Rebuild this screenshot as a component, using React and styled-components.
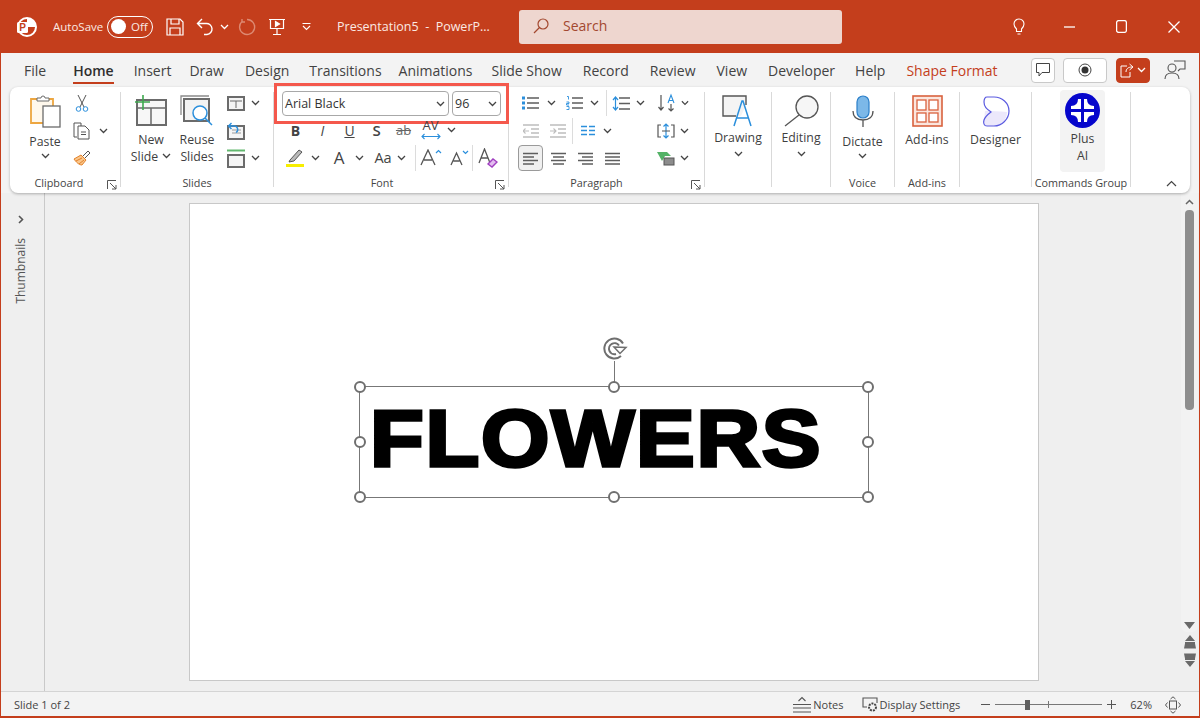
import React from 'react';
import styled, { createGlobalStyle } from 'styled-components';

const GlobalStyle = createGlobalStyle`
  html, body { margin: 0; padding: 0; }
  body { font-family: "Open Sans", "Noto Sans", sans-serif; color: #3b3b3b; }
`;

const Shell = styled.div`
  width: 1200px;
  height: 718px;
  background: #c43e1c;
  display: flex;
  flex-direction: column;
  overflow: hidden;
`;

/* title bar */
const TitleBar = styled.div`
  height: 53px;
  flex: none;
  display: flex;
  align-items: center;
  color: #fff;
  padding-left: 15px;
`;
const TitleIcon = styled.span`
  display: flex;
  align-items: center;
  justify-content: center;
  width: ${p => p.$w}px;
  margin-left: ${p => p.$ml || 0}px;
`;
const AutoSave = styled.span`
  font-size: 11.5px;
  margin-left: 16px;
  width: 47px;
  white-space: nowrap;
  color: #fbe9e3;
`;
const Toggle = styled.span`
  width: 46px;
  height: 22px;
  box-sizing: border-box;
  margin-left: 7px;
  border: 1px solid #fff;
  border-radius: 11px;
  display: flex;
  align-items: center;
  padding-left: 3px;
  gap: 5px;
  font-size: 11.5px;
  color: #fbe9e3;
  &::before {
    content: '';
    width: 15px;
    height: 15px;
    border-radius: 50%;
    background: #fff;
  }
`;
const DocName = styled.span`
  font-size: 12.5px;
  margin-left: 26px;
  width: 182px;
  white-space: pre;
  color: #fbe9e3;
`;
const SearchBox = styled.div`
  width: 323px;
  height: 34px;
  background: #eed6cf;
  border-radius: 3px;
  display: flex;
  align-items: center;
  padding: 0 0 2px 14px;
  box-sizing: border-box;
  gap: 14px;
  font-size: 14px;
  color: #a3482f;
`;

/* tabs */
const TabBar = styled.div`
  height: 34px;
  flex: none;
  margin: 0 1px;
  background: #f3f3f3;
  display: flex;
  align-items: center;
  padding-left: 23px;
  box-sizing: border-box;
`;
const Tab = styled.span`
  position: relative;
  font-size: 14px;
  margin-right: ${p => p.$mr}px;
  white-space: nowrap;
  color: ${p => (p.$accent ? '#c43e1c' : '#424242')};
  font-weight: ${p => (p.$active ? 600 : 400)};
  ${p => p.$active && `
    color: #2e2e2e;
    &::after {
      content: '';
      position: absolute;
      left: 0;
      right: 0;
      bottom: -4px;
      height: 2px;
      background: #c43e1c;
    }
  `}
`;
const TabActions = styled.div`
  margin-left: auto;
  display: flex;
  align-items: center;
  margin-right: 12px;
`;
const ActionButton = styled.span`
  width: ${p => p.$w}px;
  height: 25px;
  margin-left: ${p => p.$ml || 0}px;
  box-sizing: border-box;
  border-radius: 4px;
  border: 1px solid ${p => (p.$fill ? '#c43e1c' : '#c9c9c9')};
  background: ${p => (p.$fill ? '#c43e1c' : p.$plain ? 'transparent' : '#fff')};
  ${p => p.$plain && 'border-color: transparent;'}
  display: flex;
  align-items: center;
  justify-content: center;
  gap: 3px;
`;

/* ribbon */
const RibbonWrap = styled.div`
  height: 106px;
  flex: none;
  margin: 0 1px;
  background: #f3f3f3;
  padding: 0 9px;
  position: relative;
  z-index: 1;
`;
const Ribbon = styled.div`
  height: 106px;
  background: #fff;
  border-radius: 8px;
  box-shadow: 0 1px 3px rgba(0, 0, 0, 0.28);
  display: flex;
  padding-top: 5px;
  box-sizing: border-box;
  position: relative;
`;
const Group = styled.div`
  width: ${p => p.$w}px;
  height: 95px;
  flex: none;
  box-sizing: border-box;
  border-right: 1px solid #d9d9d9;
  display: flex;
  flex-direction: column;
  position: relative;
`;
const GroupBody = styled.div`
  height: 84px;
  flex: none;
  display: flex;
  padding-left: ${p => p.$pl || 0}px;
`;
const GroupLabel = styled.div`
  height: 14px;
  line-height: 14px;
  font-size: 10.8px;
  color: #444;
  white-space: nowrap;
  text-align: center;
  margin-left: ${p => p.$shift || 0}px;
`;
const Launcher = styled.span`
  position: absolute;
  right: 3px;
  bottom: -3px;
  display: flex;
`;
const BigButton = styled.div`
  width: ${p => p.$w}px;
  margin-left: ${p => p.$ml || 0}px;
  height: ${p => p.$h || 84}px;
  flex: none;
  display: flex;
  flex-direction: column;
  align-items: center;
  border-radius: 4px;
  background: ${p => (p.$tint ? '#f3f3f3' : 'transparent')};
  margin-top: ${p => p.$mt || 0}px;
`;
const BigIcon = styled.div`
  height: ${p => p.$h || 38.5}px;
  flex: none;
  display: flex;
  align-items: center;
  justify-content: center;
`;
const BigLabel = styled.div`
  font-size: 12.3px;
  line-height: 17px;
  white-space: nowrap;
  margin-top: ${p => p.$dy || 0}px;
  color: #3f3f3f;
  display: flex;
  align-items: center;
  gap: 4px;
`;
const BigChevron = styled.div`
  height: 15px;
  display: flex;
  align-items: center;
  margin-top: ${p => p.$dy || 0}px;
`;
const ToolStack = styled.div`
  margin-left: ${p => p.$ml || 0}px;
  display: flex;
  flex-direction: column;
  gap: 5.5px;
  flex: none;
`;
const ToolRow = styled.div`
  height: 22px;
  display: flex;
  align-items: center;
  flex: none;
  margin-top: ${p => p.$mt || 0}px;
`;
const Tool = styled.span`
  width: ${p => p.$w}px;
  height: ${p => (p.$selected ? 26 : 22)}px;
  margin-left: ${p => p.$ml || 0}px;
  flex: none;
  box-sizing: border-box;
  display: flex;
  align-items: center;
  justify-content: center;
  font-size: ${p => p.$size || 13}px;
  color: ${p => p.$color || '#444'};
  font-weight: ${p => p.$weight || 400};
  font-style: ${p => (p.$italic ? 'italic' : 'normal')};
  text-decoration: ${p => p.$line || 'none'};
  ${p => p.$selected && 'border: 1px solid #9a9a9a; border-radius: 4px; background: #f0f0f0;'}
`;
const StackedTool = styled(Tool)`
  flex-direction: column;
  justify-content: flex-start;
  line-height: 13px;
  gap: 1px;
`;
const RowSep = styled.span`
  width: 1px;
  height: ${p => p.$h || 26}px;
  background: #dcdcdc;
  flex: none;
  margin-left: ${p => p.$ml || 0}px;
`;
const FontStack = styled.div`
  display: flex;
  flex-direction: column;
  padding-left: 8px;
  margin-top: -1px;
`;
const FontPickers = styled.div`
  display: flex;
  gap: 3px;
  height: 25px;
  flex: none;
  outline: 3px solid #f4584c;
  outline-offset: 5px;
  width: 219px;
`;
const Picker = styled.div`
  width: ${p => p.$w}px;
  box-sizing: border-box;
  border: 1px solid #a8a8a8;
  border-radius: 4px;
  display: flex;
  align-items: center;
  justify-content: space-between;
  padding: 0 3px 0 2px;
  font-size: 12.5px;
  color: #333;
  background: #fff;
`;
const CollapseBtn = styled.span`
  position: absolute;
  right: 13px;
  bottom: 6px;
  display: flex;
`;

/* workspace */
const Workspace = styled.div`
  flex: 1;
  min-height: 0;
  margin: 0 1px;
  background: #efefef;
  display: flex;
  border-bottom: 1px solid #d4d4d4;
`;
const ThumbPane = styled.div`
  width: 44px;
  flex: none;
  box-sizing: border-box;
  border-right: 1px solid #c9c9c9;
  display: flex;
  flex-direction: column;
  align-items: center;
  padding: 22px 4px 0 0;
  gap: 14px;
`;
const ThumbLabel = styled.span`
  writing-mode: vertical-rl;
  transform: rotate(180deg);
  font-size: 12px;
  color: #555;
`;
const Canvas = styled.div`
  flex: 1;
  padding: 10px 0 0 144px;
`;
const Slide = styled.div`
  width: 850px;
  height: 478px;
  box-sizing: border-box;
  background: #fff;
  border: 1px solid #c8c8c8;
  position: relative;
`;
const TextFrame = styled.div`
  position: absolute;
  left: 169px;
  top: 182px;
  width: 510px;
  height: 112px;
  box-sizing: border-box;
  border: 1px solid #777;
  display: flex;
  align-items: center;
  padding: 0 0 6px 10px;
`;
const BigWord = styled.span`
  font-family: "Liberation Sans", Arial, sans-serif;
  font-weight: 700;
  font-size: 80px;
  line-height: 1;
  color: #000;
  -webkit-text-stroke: 3.4px #000;
  letter-spacing: 1.6px;
  white-space: nowrap;
  transform: scaleX(1.1);
  transform-origin: left center;
`;
const Handle = styled.span`
  position: absolute;
  left: ${p => p.$x}%;
  top: ${p => p.$y}%;
  width: 12px;
  height: 12px;
  box-sizing: border-box;
  border: 2px solid #6f6f6f;
  border-radius: 50%;
  background: #fff;
  transform: translate(-50%, -50%);
`;
const RotateStem = styled.span`
  position: absolute;
  left: 50%;
  top: -26px;
  width: 1px;
  height: 21px;
  background: #777;
`;
const RotateIcon = styled.span`
  position: absolute;
  left: calc(50% - 12px);
  top: -50px;
  display: flex;
`;
const ScrollColumn = styled.div`
  width: 17px;
  flex: none;
  margin-right: 1px;
  display: flex;
  flex-direction: column;
  align-items: center;
`;
const ScrollTrack = styled.div`
  width: 100%;
  height: 439px;
  flex: none;
  background: #f2f2f2;
  border-radius: 0 0 6px 6px;
  display: flex;
  flex-direction: column;
  align-items: center;
  padding: 6px 0 3px;
  box-sizing: border-box;
`;
const ScrollThumb = styled.div`
  width: 9px;
  height: 200px;
  flex: none;
  margin-top: 5px;
  background: #8e8e8e;
  border-radius: 4px;
`;
const ScrollSpacer = styled.div`
  flex: 1;
`;
const ScrollDouble = styled.div`
  display: flex;
  flex: none;
  margin-top: ${p => p.$mt}px;
`;

/* status bar */
const StatusBar = styled.div`
  height: 24px;
  flex: none;
  margin: 0 1px 2px;
  background: #f3f3f3;
  display: flex;
  align-items: center;
  font-size: 11px;
  color: #444;
  padding: 1px 0 0 13px;
  box-sizing: border-box;
`;
const StatusRight = styled.div`
  margin-left: auto;
  display: flex;
  align-items: center;
`;
const StatusItem = styled.span`
  display: flex;
  align-items: center;
  gap: 2px;
  margin-left: ${p => p.$ml || 0}px;
  white-space: nowrap;
`;
const ZoomTrack = styled.span`
  width: 107px;
  height: 1px;
  background: #777;
  position: relative;
  margin-left: 5px;
  &::before {
    content: '';
    position: absolute;
    left: 30px;
    top: -4px;
    width: 5px;
    height: 10px;
    background: #5f5f5f;
  }
  &::after {
    content: '';
    position: absolute;
    left: 53px;
    top: -3px;
    width: 1px;
    height: 7px;
    background: #777;
  }
`;

/* icons */
const G = '#6b6b6b';
const B = '#2b8fdc';
const Chevron = ({ color = '#444' }) => (
  <svg width="9" height="6" viewBox="0 0 9 6" fill="none" stroke={color} strokeWidth="1.3"><path d="M1 1l3.5 3.5L8 1" /></svg>
);
const Svg = ({ w, h, children, fill = 'none', stroke = G, sw = 1.3 }) => (
  <svg width={w} height={h} viewBox={`0 0 ${w} ${h}`} fill={fill} stroke={stroke} strokeWidth={sw}>{children}</svg>
);

const LogoIcon = () => (
  <svg width="22" height="22" viewBox="0 0 22 22">
    <circle cx="12" cy="11" r="9" fill="none" stroke="#fff" strokeWidth="2" />
    <path d="M12 2a9 9 0 0 1 9 9h-9z" fill="#fff" />
    <rect x="2" y="6" width="11" height="11" rx="1.5" fill="#fff" />
    <text x="7.5" y="15" textAnchor="middle" fontFamily="Liberation Sans" fontWeight="700" fontSize="10" fill="#c43e1c">P</text>
  </svg>
);
const SaveIcon = () => (
  <Svg w={18} h={18} stroke="#fff" sw={1.2}>
    <path d="M1 1h13l3 3v13H1z" />
    <path d="M5 1v5h8V1M4 17v-7h10v7" />
  </Svg>
);
const UndoIcon = () => (
  <Svg w={18} h={18} stroke="#fff" sw={1.4}>
    <path d="M6 1L1.5 5.5 6 10M2 5.500h8a5.500 5.500 0 0 1 1 11H8" />
  </Svg>
);
const RedoIcon = () => (
  <Svg w={18} h={18} stroke="#dd8a73" sw={1.4}>
    <path d="M4 3.500A7.500 7.500 0 1 0 9 1.500M4 1v3h3" />
  </Svg>
);
const PresentIcon = () => (
  <Svg w={18} h={18} stroke="#fff" sw={1.2}>
    <path d="M1 1.500h16M2.500 1.500v9h13v-9M9 10.500V16M5 16.500h8" />
    <path d="M7.500 3.500l4 2.500-4 2.500z" fill="#fff" />
  </Svg>
);
const QatIcon = () => (
  <Svg w={9} h={8} stroke="#fff" sw={1.1}>
    <path d="M0.500 0.500h8M1 3l3.500 3.500L8 3" />
  </Svg>
);
const SearchIcon = () => (
  <Svg w={16} h={16} stroke="#a3482f" sw={1.2}>
    <circle cx="10" cy="6" r="5" />
    <path d="M6.500 9.500L1 15" />
  </Svg>
);
const BulbIcon = () => (
  <Svg w={12} h={17} stroke="#fff" sw={1.1}>
    <path d="M3.500 11C1.500 9 1 7.500 1 6a5 5 0 0 1 10 0c0 1.500-.5 3-2.500 5v2.500h-5zM4.500 16h3" />
  </Svg>
);
const MinIcon = () => <Svg w={11} h={2} stroke="#fff"><path d="M0 1h11" /></Svg>;
const MaxIcon = () => <Svg w={11} h={13} stroke="#fff"><rect x="0.600" y="0.600" width="9.800" height="11.800" rx="2" /></Svg>;
const CloseIcon = () => <Svg w={12} h={12} stroke="#fff"><path d="M.5.500l11 11M11.500.500l-11 11" /></Svg>;

const CommentIcon = () => (
  <Svg w={14} h={14} stroke="#444" sw={1}><path d="M.5.500h13v9H6L3 13V9.500H.5z" /></Svg>
);
const RecordIcon = () => (
  <svg width="14" height="14" viewBox="0 0 14 14"><circle cx="7" cy="7" r="6" fill="none" stroke="#444" /><circle cx="7" cy="7" r="3.500" fill="#333" /></svg>
);
const ShareIcon = () => (
  <Svg w={14} h={15} stroke="#fff" sw={1}><path d="M7 3H1v11h9V9M6 9c0-3 2-5 6-5M9.500 1L13 4 9.500 7" /></Svg>
);
const PersonIcon = () => (
  <Svg w={22} h={20} stroke="#555" sw={1.1}>
    <circle cx="8" cy="8" r="4" />
    <path d="M1 19c0-4 3-6 7-6s7 2 7 6M10 1h11v8h-5l-2 2" />
  </Svg>
);

const PasteIcon = () => (
  <svg width="32" height="34" viewBox="0 0 32 34" fill="none">
    <path d="M2 5h22v24H2z" stroke="#eda640" strokeWidth="1.800" fill="#fff8ec" />
    <path d="M8 7V4h4a2 2 0 0 1 4 0h4v3z" stroke={G} fill="#fff" />
    <rect x="14" y="12" width="17" height="21" fill="#fff" stroke={G} strokeWidth="1.300" />
  </svg>
);
const ScissorsIcon = () => (
  <svg width="14" height="18" viewBox="0 0 14 18" fill="none">
    <path d="M3 1l6 12M11 1L5 13" stroke="#555" />
    <circle cx="3.500" cy="15" r="2.300" stroke={B} />
    <circle cx="10.500" cy="15" r="2.300" stroke={B} />
  </svg>
);
const CopyIcon = () => (
  <Svg w={18} h={18} stroke="#555" sw={1}>
    <path d="M4 15H1V1h7v3" />
    <path d="M5 4h7l4 4v9H5z" />
    <path d="M8 10h5M8 12.500h5" />
  </Svg>
);
const BrushIcon = () => (
  <svg width="18" height="16" viewBox="0 0 18 16" fill="none">
    <path d="M1 9l7-4 5 5-4 5C6 15 3 12 1 9z" fill="#f9c68c" stroke="#e38128" />
    <path d="M3 11l6-3M6 14l5-4" stroke="#e38128" />
    <path d="M10 6l5-5 2 2-5 5" stroke="#555" />
  </svg>
);
const NewSlideIcon = () => (
  <svg width="34" height="32" viewBox="0 0 34 32" fill="none">
    <rect x="3" y="5" width="29" height="25" stroke={G} strokeWidth="2" fill="#f7f7f7" />
    <path d="M3 13h29M17 13v17" stroke={G} strokeWidth="1.500" />
    <path d="M9 0v15M1 7h15" stroke="#3ea84e" strokeWidth="1.600" />
  </svg>
);
const ReuseIcon = () => (
  <svg width="34" height="32" viewBox="0 0 34 32" fill="none">
    <path d="M1 20V1h28" stroke="#8a8a8a" strokeWidth="1.300" />
    <rect x="4" y="4" width="25" height="22" stroke={G} strokeWidth="2" fill="#f3f3f3" />
    <circle cx="20" cy="18" r="7" fill="#fff" stroke={B} strokeWidth="1.500" />
    <path d="M25 23l7 7" stroke={B} strokeWidth="1.500" />
  </svg>
);
const LayoutIcon = () => (
  <svg width="18" height="15" viewBox="0 0 18 15" fill="none">
    <rect x="1" y="1" width="16" height="13" stroke={G} strokeWidth="2" fill="#f4f4f4" />
    <path d="M3 5h12M9 5v7" stroke={G} />
  </svg>
);
const ResetIcon = () => (
  <svg width="18" height="18" viewBox="0 0 18 18" fill="none">
    <rect x="1" y="4" width="16" height="13" stroke={G} strokeWidth="2" fill="#f4f4f4" />
    <path d="M5 8h9M5 11h9" stroke="#9a9a9a" />
    <path d="M4.500 1L1.500 4 4.500 7M2 4h5a3.500 3.500 0 0 1 2 6.500" stroke={B} strokeWidth="1.400" />
  </svg>
);
const SectionIcon = () => (
  <svg width="18" height="19" viewBox="0 0 18 19" fill="none">
    <path d="M0 1.500h18" stroke="#62b86f" strokeWidth="2" />
    <rect x="1" y="6" width="16" height="12" stroke={G} strokeWidth="2" fill="#f4f4f4" />
  </svg>
);
const HighlightIcon = () => (
  <svg width="18" height="19" viewBox="0 0 18 19" fill="none">
    <path d="M4 12l9-10 3 2-8 9-5 1z" stroke="#555" fill="#bbb" />
    <path d="M0 17.500h18" stroke="#f7ee00" strokeWidth="3" />
  </svg>
);
const EraserIcon = () => (
  <svg width="20" height="20" viewBox="0 0 20 20" fill="none">
    <path d="M1 15L6.500 1 12 15M3 10h7" stroke="#555" strokeWidth="1.300" />
    <path d="M10 16l5-5 4 3-5 5z" stroke="#a03fc0" strokeWidth="1.400" fill="#e3bdf0" />
  </svg>
);
const GrowGlyph = ({ down, big }) => (
  <svg width={big ? 22 : 19} height="17" viewBox={big ? '0 0 22 17' : '0 0 19 17'} fill="none">
    <path d={big ? 'M1 16L8 1l7 15M4 11h8' : 'M1 16L6.500 4 12 16M3.500 12h6'} stroke="#555" strokeWidth="1.300" />
    <path d={down ? 'M13 2l2.500 2.500L18 2' : 'M16 4l2.500-2.500L21 4'} stroke={B} strokeWidth="1.200" />
  </svg>
);
const Lines = ({ rows, w = 15 }) => (
  <Svg w={w} h={13} stroke="#5e5e5e" sw={1.300}>
    <path d={rows} />
  </Svg>
);
const BulletsIcon = () => (
  <svg width="17" height="14" viewBox="0 0 17 14" fill="none">
    <path d="M5 2h12M5 7h12M5 12h12" stroke="#5e5e5e" strokeWidth="1.300" />
    <path d="M0 .500h3v3H0zM0 5.500h3v3H0zM0 10.500h3v3H0z" fill={B} />
  </svg>
);
const NumberingIcon = () => (
  <svg width="17" height="14" viewBox="0 0 17 14" fill="none">
    <path d="M6 2h11M6 7h11M6 12h11" stroke="#5e5e5e" strokeWidth="1.300" />
    <path d="M1 .500h1.500v3M.500 6h2.500v1.500H.500V9h2.500M.500 10.500h2.500v3H.500" stroke={B} strokeWidth=".9" />
  </svg>
);
const SpacingIcon = () => (
  <svg width="18" height="15" viewBox="0 0 18 15" fill="none">
    <path d="M7 2h11M7 7.500h11M7 13h11" stroke="#5e5e5e" strokeWidth="1.300" />
    <path d="M1 4l2.500-3L6 4M3.500 2v11M1 11l2.500 3L6 11" stroke={B} strokeWidth="1.200" />
  </svg>
);
const TextDirIcon = () => (
  <svg width="20" height="20" viewBox="0 0 20 20" fill="none">
    <path d="M3 2v15M.500 14L3 17l2.500-3M13 11v7M10.500 15.500L13 18l2.500-2.500" stroke="#555" strokeWidth="1.200" />
    <path d="M10 10l3-8 3 8M11 7.500h4" stroke={B} strokeWidth="1.100" />
  </svg>
);
const IndentIcon = ({ flip }) => (
  <svg width="16" height="14" viewBox="0 0 16 14" fill="none">
    <path d="M0 1h16M8 5h8M8 9h8M0 13h16" stroke="#bdbdbd" strokeWidth="1.300" />
    <path d={flip ? 'M0 7h6M3.500 4.500L6 7 3.500 9.500' : 'M6 7H0M2.500 4.500L0 7l2.500 2.500'} stroke="#bdbdbd" strokeWidth="1.100" />
  </svg>
);
const ColumnsIcon = () => (
  <svg width="14" height="11" viewBox="0 0 14 11" fill="none">
    <path d="M0 1.500h6M8 1.500h6M0 5.500h6M8 5.500h6M0 9.500h6M8 9.500h6" stroke={B} strokeWidth="1.700" />
  </svg>
);
const AlignTextIcon = () => (
  <svg width="18" height="16" viewBox="0 0 18 16" fill="none">
    <path d="M4 2H1v12h3M14 2h3v12h-3" stroke="#555" strokeWidth="1.200" />
    <path d="M9 1v14M6.500 3.500L9 1l2.500 2.500M6.500 12.500L9 15l2.500-2.500" stroke={B} strokeWidth="1.200" />
    <path d="M5 8h8" stroke="#555" strokeWidth="1" />
  </svg>
);
const SmartArtIcon = () => (
  <svg width="18" height="15" viewBox="0 0 18 15" fill="none">
    <path d="M0 1h10l4 4H8l-3 5z" fill="#54b267" />
    <rect x="7" y="7" width="10" height="7" fill="#8c8c8c" stroke="#555" />
  </svg>
);
const DrawingIcon = () => (
  <svg width="32" height="32" viewBox="0 0 32 32" fill="none">
    <path d="M1 1h23v9l-5 11H1z" fill="#f4f4f4" />
    <path d="M14 21H1V1h23v9" stroke="#555" strokeWidth="1.400" />
    <path d="M12 31l8-25h1l8 25M15 23h11" stroke={B} strokeWidth="1.500" />
  </svg>
);
const EditingIcon = () => (
  <svg width="35" height="32" viewBox="0 0 35 32" fill="none">
    <circle cx="23" cy="12" r="11" fill="#f6f6f6" stroke="#555" strokeWidth="1.300" />
    <path d="M15 20L1 31" stroke="#555" strokeWidth="1.300" />
  </svg>
);
const MicIcon = () => (
  <svg width="22" height="32" viewBox="0 0 22 32" fill="none">
    <rect x="5" y="1" width="12" height="22" rx="6" fill="#7cb8e8" stroke="#2b7fc9" strokeWidth="1.200" />
    <path d="M1 16c0 6 4 9 10 9s10-3 10-9M11 25v7" stroke="#555" strokeWidth="1.300" />
  </svg>
);
const AddinsIcon = () => (
  <svg width="31" height="32" viewBox="0 0 31 32" fill="none">
    <rect x="1" y="1" width="29" height="30" fill="#fbe6de" stroke="#d9623e" strokeWidth="1.600" />
    <rect x="5" y="5" width="9" height="10" fill="#fff" stroke="#d9623e" strokeWidth="1.300" />
    <rect x="17" y="5" width="9" height="10" fill="#fff" stroke="#d9623e" strokeWidth="1.300" />
    <rect x="5" y="18" width="9" height="9" fill="#fff" stroke="#d9623e" strokeWidth="1.300" />
    <rect x="17" y="18" width="9" height="9" fill="#fff" stroke="#d9623e" strokeWidth="1.300" />
  </svg>
);
const DesignerIcon = () => (
  <svg width="28" height="31" viewBox="0 0 28 31" fill="none">
    <path d="M3 15c7 0 14 0 22 1 0 8-6 14-13 14H5c-3 0-4-3-3-6z" fill="#ece8fb" />
    <path d="M5 1h7c8 0 15 6 15 14s-7 15-15 15H5c-3 0-4-3-3-6 1-3 3-5 7-8-4-3-7-5-7-10 0-3 1-5 3-5z" stroke="#5a5ae0" strokeWidth="1.200" />
  </svg>
);
const PlusAiIcon = () => (
  <svg width="35" height="35" viewBox="0 0 35 35">
    <circle cx="17.500" cy="17.500" r="17.500" fill="#0606cc" />
    <path d="M16 6V16H6V13Q13 13 13 6Z" fill="#fff" />
    <path d="M19 6V16H29V13Q22 13 22 6Z" fill="#fff" />
    <path d="M16 29V19H6V22Q13 22 13 29Z" fill="#fff" />
    <path d="M19 29V19H29V22Q22 22 22 29Z" fill="#fff" />
  </svg>
);
const LaunchIcon = () => (
  <Svg w={10} h={10} stroke="#555" sw={1}><path d="M.5 9V.500H9M3 3l6 6M9 5v4H5" /></Svg>
);
const RotateGlyph = () => (
  <svg width="28" height="24" viewBox="0 0 28 24" fill="none">
    <path d="M21 6.500A10 10 0 1 0 19 19" stroke="#6f6f6f" strokeWidth="2" />
    <path d="M17 8.500A5.500 5.500 0 1 0 14 17" stroke="#6f6f6f" strokeWidth="2" />
    <path d="M12 10l12 .5-6 6z" fill="#fff" stroke="#6f6f6f" strokeWidth="1.500" />
  </svg>
);
const Tri = ({ color = '#6a6a6a' }) => (
  <svg width="11" height="7" viewBox="0 0 11 7"><path d="M0 0h11L5.500 7z" fill={color} /></svg>
);
const DoubleTri = ({ up }) => (
  <svg width="12" height="14" viewBox="0 0 12 14" fill="#6a6a6a">
    {up ? <path d="M6 0l5 6H1zM1 7h10v1.500l1 5H0l1-5z" /> : <path d="M6 14l5-6H1zM1 7h10V5.500l1-5H0l1 5z" />}
  </svg>
);
const NotesIcon = () => (
  <Svg w={18} h={18} stroke="#555" sw={1.100}><path d="M0 8.500h18M0 12h18M0 16h18M5.500 5L9 1.500 12.500 5" /></Svg>
);
const DisplayIcon = () => (
  <svg width="16" height="15" viewBox="0 0 16 15" fill="none">
    <path d="M5 10H1V1h14v5" stroke="#555" strokeWidth="1.100" />
    <circle cx="10.500" cy="10" r="3.500" stroke="#444" strokeWidth="2" strokeDasharray="2 1" />
  </svg>
);
const FitIcon = () => (
  <Svg w={16} h={18} stroke="#555" sw={1}>
    <rect x="4.500" y="5" width="7" height="8" />
    <path d="M5.500 3L8 .8 10.500 3M5.500 15L8 17.200 10.500 15M2.500 6.500L.5 9l2 2.500M13.500 6.500l2 2.500-2 2.500" />
  </Svg>
);

const tabs = [
  ['File', 27],
  ['Home', 20],
  ['Insert', 18],
  ['Draw', 21],
  ['Design', 20],
  ['Transitions', 17],
  ['Animations', 19],
  ['Slide Show', 21],
  ['Record', 21],
  ['Review', 21],
  ['View', 21],
  ['Developer', 20],
  ['Help', 21],
];

const Big = ({ w, ml, icon, lines, chevron, iconH, labelDy = 0, chevDy = 0, tint, h, mt }) => (
  <BigButton $w={w} $ml={ml} $tint={tint} $h={h} $mt={mt}>
    <BigIcon $h={iconH}>{icon}</BigIcon>
    {lines.map((line, i) => (
      <BigLabel key={line} $dy={i === 0 ? labelDy : 0}>
        {line}
        {chevron === 'inline' && i === lines.length - 1 && <Chevron />}
      </BigLabel>
    ))}
    {chevron === true && <BigChevron $dy={chevDy}><Chevron /></BigChevron>}
  </BigButton>
);

const App = () => (
  <Shell>
    <GlobalStyle />
    <TitleBar>
      <TitleIcon $w={22}><LogoIcon /></TitleIcon>
      <AutoSave>AutoSave</AutoSave>
      <Toggle>Off</Toggle>
      <TitleIcon $w={18} $ml={13}><SaveIcon /></TitleIcon>
      <TitleIcon $w={18} $ml={12}><UndoIcon /></TitleIcon>
      <TitleIcon $w={9} $ml={6}><Chevron color="#fff" /></TitleIcon>
      <TitleIcon $w={18} $ml={9}><RedoIcon /></TitleIcon>
      <TitleIcon $w={18} $ml={12}><PresentIcon /></TitleIcon>
      <TitleIcon $w={9} $ml={16}><QatIcon /></TitleIcon>
      <DocName>Presentation5  -  PowerP...</DocName>
      <SearchBox><SearchIcon />Search</SearchBox>
      <TitleIcon $w={12} $ml={171}><BulbIcon /></TitleIcon>
      <TitleIcon $w={11} $ml={39}><MinIcon /></TitleIcon>
      <TitleIcon $w={11} $ml={41}><MaxIcon /></TitleIcon>
      <TitleIcon $w={12} $ml={41}><CloseIcon /></TitleIcon>
    </TitleBar>

    <TabBar>
      {tabs.map(([name, mr]) => (
        <Tab key={name} $mr={mr} $active={name === 'Home'}>{name}</Tab>
      ))}
      <Tab $accent $mr={0}>Shape Format</Tab>
      <TabActions>
        <ActionButton $w={24}><CommentIcon /></ActionButton>
        <ActionButton $w={44} $ml={8}><RecordIcon /></ActionButton>
        <ActionButton $w={34} $ml={9} $fill><ShareIcon /><Chevron color="#fff" /></ActionButton>
        <ActionButton $w={24} $ml={13} $plain><PersonIcon /></ActionButton>
      </TabActions>
    </TabBar>

    <RibbonWrap>
      <Ribbon>
        <Group $w={111}>
          <GroupBody>
            <Big w={42} ml={14} icon={<PasteIcon />} lines={['Paste']} chevron labelDy={2} chevDy={-1} />
            <ToolStack $ml={3}>
              <ToolRow><Tool $w={26}><ScissorsIcon /></Tool></ToolRow>
              <ToolRow><Tool $w={26}><CopyIcon /></Tool><Tool $w={16}><Chevron /></Tool></ToolRow>
              <ToolRow><Tool $w={26}><BrushIcon /></Tool></ToolRow>
            </ToolStack>
          </GroupBody>
          <GroupLabel $shift={-12}>Clipboard</GroupLabel>
          <Launcher><LaunchIcon /></Launcher>
        </Group>

        <Group $w={153}>
          <GroupBody>
            <Big w={44} ml={8} icon={<NewSlideIcon />} lines={['New', 'Slide']} chevron="inline" />
            <Big w={44} ml={2} icon={<ReuseIcon />} lines={['Reuse', 'Slides']} />
            <ToolStack $ml={5}>
              <ToolRow><Tool $w={24}><LayoutIcon /></Tool><Tool $w={14}><Chevron /></Tool></ToolRow>
              <ToolRow><Tool $w={24}><ResetIcon /></Tool></ToolRow>
              <ToolRow><Tool $w={24}><SectionIcon /></Tool><Tool $w={14}><Chevron /></Tool></ToolRow>
            </ToolStack>
          </GroupBody>
          <GroupLabel>Slides</GroupLabel>
        </Group>

        <Group $w={235}>
          <GroupBody>
            <FontStack>
              <FontPickers>
                <Picker $w={167}>Arial Black<Chevron /></Picker>
                <Picker $w={49}>96<Chevron /></Picker>
              </FontPickers>
              <ToolRow $mt={3}>
                <Tool $w={27} $weight={700} $size={14}>B</Tool>
                <Tool $w={27} $italic $size={14}>I</Tool>
                <Tool $w={27} $line="underline" $size={14}>U</Tool>
                <Tool $w={27} $weight={600} $size={15}>S</Tool>
                <Tool $w={27} $line="line-through" $size={13} $color="#666">ab</Tool>
                <StackedTool $w={27}>
                  AV
                  <svg width="20" height="7" viewBox="0 0 20 7" fill="none">
                    <path d="M1 3.500h18M3.500 1L1 3.500 3.500 6M16.500 1L19 3.500 16.500 6" stroke={B} strokeWidth="1.100" />
                  </svg>
                </StackedTool>
                <Tool $w={14}><Chevron /></Tool>
              </ToolRow>
              <ToolRow $mt={5.5}>
                <Tool $w={26}><HighlightIcon /></Tool>
                <Tool $w={14}><Chevron /></Tool>
                <Tool $w={26} $ml={4} $size={17}>A</Tool>
                <Tool $w={14}><Chevron /></Tool>
                <Tool $w={20} $ml={7} $size={14.500}>Aa</Tool>
                <Tool $w={16}><Chevron /></Tool>
                <RowSep $ml={6} />
                <Tool $w={30}><GrowGlyph big /></Tool>
                <Tool $w={26}><GrowGlyph down /></Tool>
                <RowSep />
                <Tool $w={30}><EraserIcon /></Tool>
              </ToolRow>
            </FontStack>
          </GroupBody>
          <GroupLabel $shift={-18}>Font</GroupLabel>
          <Launcher><LaunchIcon /></Launcher>
        </Group>

        <Group $w={196}>
          <GroupBody $pl={9}>
            <ToolStack>
              <ToolRow>
                <Tool $w={24}><BulletsIcon /></Tool>
                <Tool $w={18}><Chevron /></Tool>
                <Tool $w={24} $ml={2}><NumberingIcon /></Tool>
                <Tool $w={17}><Chevron /></Tool>
                <RowSep $ml={3} />
                <Tool $w={28}><SpacingIcon /></Tool>
                <Tool $w={10}><Chevron /></Tool>
                <Tool $w={26} $ml={10}><TextDirIcon /></Tool>
                <Tool $w={8}><Chevron /></Tool>
              </ToolRow>
              <ToolRow>
                <Tool $w={26}><IndentIcon /></Tool>
                <Tool $w={28}><IndentIcon flip /></Tool>
                <RowSep />
                <Tool $w={28} $ml={1}><ColumnsIcon /></Tool>
                <Tool $w={10}><Chevron /></Tool>
                <Tool $w={26} $ml={41}><AlignTextIcon /></Tool>
                <Tool $w={10}><Chevron /></Tool>
              </ToolRow>
              <ToolRow>
                <Tool $w={25} $selected><Lines rows="M0 1.500h15M0 5h11M0 8.500h15M0 12h11" /></Tool>
                <Tool $w={28} $ml={1}><Lines rows="M0 1.500h15M2 5h11M0 8.500h15M2 12h11" /></Tool>
                <Tool $w={27}><Lines rows="M0 1.500h15M4 5h11M0 8.500h15M4 12h11" /></Tool>
                <Tool $w={27}><Lines rows="M0 1.500h15M0 5h15M0 8.500h15M0 12h15" /></Tool>
                <Tool $w={26} $ml={27}><SmartArtIcon /></Tool>
                <Tool $w={10}><Chevron /></Tool>
              </ToolRow>
            </ToolStack>
          </GroupBody>
          <GroupLabel $shift={-20}>Paragraph</GroupLabel>
          <Launcher><LaunchIcon /></Launcher>
        </Group>

        <Group $w={67}>
          <GroupBody>
            <Big w={66} icon={<DrawingIcon />} iconH={37} lines={['Drawing']} chevron />
          </GroupBody>
        </Group>
        <Group $w={59}>
          <GroupBody>
            <Big w={58} icon={<EditingIcon />} iconH={37} lines={['Editing']} chevron />
          </GroupBody>
        </Group>
        <Group $w={64}>
          <GroupBody>
            <Big w={63} icon={<MicIcon />} lines={['Dictate']} chevron labelDy={2} chevDy={-1} />
          </GroupBody>
          <GroupLabel>Voice</GroupLabel>
        </Group>
        <Group $w={65}>
          <GroupBody>
            <Big w={64} icon={<AddinsIcon />} lines={['Add-ins']} />
          </GroupBody>
          <GroupLabel>Add-ins</GroupLabel>
        </Group>
        <Group $w={72}>
          <GroupBody>
            <Big w={71} icon={<DesignerIcon />} lines={['Designer']} />
          </GroupBody>
        </Group>
        <Group $w={99}>
          <GroupBody>
            <Big w={45} ml={28} tint h={82} mt={-2} iconH={40} icon={<PlusAiIcon />} lines={['Plus', 'AI']} />
          </GroupBody>
          <GroupLabel>Commands Group</GroupLabel>
        </Group>
        <CollapseBtn>
          <svg width="11" height="7" viewBox="0 0 11 7" fill="none" stroke="#444" strokeWidth="1.200"><path d="M1 6l4.500-4.500L10 6" /></svg>
        </CollapseBtn>
      </Ribbon>
    </RibbonWrap>

    <Workspace>
      <ThumbPane>
        <svg width="6" height="9" viewBox="0 0 6 9" fill="none" stroke="#555" strokeWidth="1.600"><path d="M1 1l3.500 3.500L1 8" /></svg>
        <ThumbLabel>Thumbnails</ThumbLabel>
      </ThumbPane>
      <Canvas>
        <Slide>
          <TextFrame>
            <BigWord>FLOWERS</BigWord>
            <RotateStem />
            <RotateIcon><RotateGlyph /></RotateIcon>
            <Handle $x={0} $y={0} />
            <Handle $x={50} $y={0} />
            <Handle $x={100} $y={0} />
            <Handle $x={0} $y={50} />
            <Handle $x={100} $y={50} />
            <Handle $x={0} $y={100} />
            <Handle $x={50} $y={100} />
            <Handle $x={100} $y={100} />
          </TextFrame>
        </Slide>
      </Canvas>
      <ScrollColumn>
        <ScrollTrack>
          <svg width="9" height="6" viewBox="0 0 9 6" fill="none" stroke="#666" strokeWidth="1.500"><path d="M1 5l3.500-3.500L8 5" /></svg>
          <ScrollThumb />
          <ScrollSpacer />
          <Tri />
        </ScrollTrack>
        <ScrollDouble $mt={3}><DoubleTri up /></ScrollDouble>
        <ScrollDouble $mt={4}><DoubleTri /></ScrollDouble>
      </ScrollColumn>
    </Workspace>

    <StatusBar>
      Slide 1 of 2
      <StatusRight>
        <StatusItem><NotesIcon />Notes</StatusItem>
        <StatusItem $ml={18}><DisplayIcon />Display Settings</StatusItem>
        <StatusItem $ml={21}>
          <svg width="9" height="1" viewBox="0 0 9 1"><path d="M0 .5h9" stroke="#555" /></svg>
        </StatusItem>
        <ZoomTrack />
        <StatusItem $ml={5}>
          <svg width="9" height="9" viewBox="0 0 9 9"><path d="M0 4.500h9M4.500 0v9" stroke="#555" /></svg>
        </StatusItem>
        <StatusItem $ml={14}>62%</StatusItem>
        <StatusItem $ml={13}><FitIcon /></StatusItem>
        <StatusItem $ml={18} />
      </StatusRight>
    </StatusBar>
  </Shell>
);

export default App;
